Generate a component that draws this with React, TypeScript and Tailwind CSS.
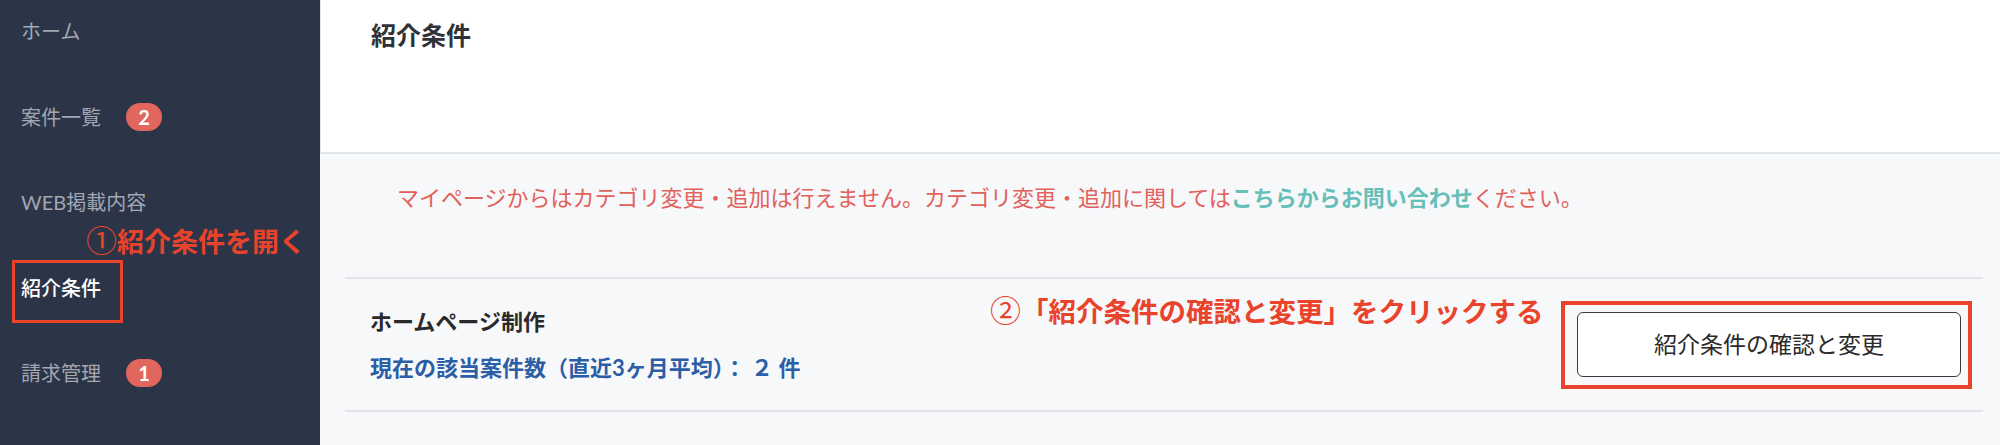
const font = "font-['Lato','Noto_Sans_CJK_JP',sans-serif]";

function NavItem({ label, badge, active }: { label: string; badge?: string; active?: boolean }) {
    return (
        <div className="flex h-6 items-center pl-[21px]">
            <span className={active ? "text-[20px] leading-6 font-medium text-white" : "text-[20px] leading-6 text-[#a2a7b1]"}>
                {label}
            </span>
            {badge && (
                <span className="ml-[25px] flex h-[28px] w-[36px] items-center justify-center rounded-full bg-[#e0665e] text-[20px] font-bold text-white">
                    {badge}
                </span>
            )}
        </div>
    );
}

function Sidebar() {
    return (
        <aside className="relative flex h-[445px] w-[320px] shrink-0 flex-col gap-[61.5px] bg-[#2c3548] pt-[19px]">
            <NavItem label="ホーム" />
            <NavItem label="案件一覧" badge="2" />
            <NavItem label="WEB掲載内容" />
            <NavItem label="紹介条件" active />
            <NavItem label="請求管理" badge="1" />

            {/* annotation overlays */}
            <div className="absolute left-[86px] top-[225px] flex items-baseline text-[27px] leading-[28px] font-bold text-[#e9432b]">
                <span className="font-['Noto_Sans_CJK_JP',sans-serif] text-[31px] font-normal">①</span>
                <span>紹介条件を開く</span>
            </div>
            <div className="absolute left-[12px] top-[260px] h-[63px] w-[111px] border-[3px] border-[#e9432b]" />
        </aside>
    );
}

export default function App() {
    return (
        <div className={`flex h-[445px] w-[2000px] overflow-hidden ${font}`}>
            <Sidebar />
            <main className="flex flex-1 flex-col">
                <header className="h-[154px] shrink-0 border-b-2 border-l border-[#e1e4e8] bg-white pl-[50px] pt-[21px]">
                    <h1 className="text-[25px] leading-[28px] font-bold text-[#2f3236]">紹介条件</h1>
                </header>
                <section className="flex-1 bg-[#f7f8fa] pl-[25px] pr-[17px]">
                    <div className="h-[123px] pl-[52px] pt-[33px] text-[22px] leading-[22px] text-[#e2615b]">
                        マイページからはカテゴリ変更・追加は行えません。カテゴリ変更・追加に関しては
                        <span className="font-bold text-[#66bfb8]">こちらからお問い合わせ</span>
                        ください。
                    </div>
                    <div className="relative flex h-[135px] items-center justify-between border-y-2 border-[#e1e3e7] pl-[25px] pr-[22px]">
                        <div className="flex flex-col gap-[24px]">
                            <div className="text-[22px] leading-[22px] font-bold text-[#2a2a2a]">ホームページ制作</div>
                            <div className="text-[22px] leading-[22px] font-bold text-[#2b5ea6]">
                                現在の該当案件数（直近3ヶ月平均）： ２ 件
                            </div>
                        </div>

                        <div className="absolute left-[645px] top-[16px] flex items-baseline text-[27.5px] leading-[28px] font-bold text-[#e9432b]">
                            <span className="font-['Noto_Sans_CJK_JP',sans-serif] text-[31px] font-normal">②</span>
                            <span>「紹介条件の確認と変更」をクリックする</span>
                        </div>

                        <div className="relative">
                            <button className="flex h-[65px] w-[384px] items-center justify-center rounded-[6px] border-[1.5px] border-[#3a3b3e] bg-white text-[23px] text-[#2a2a2a]">
                                紹介条件の確認と変更
                            </button>
                            <div className="absolute -bottom-[12px] -left-[16px] -right-[11px] -top-[11px] border-4 border-[#e9432b]" />
                        </div>
                    </div>
                </section>
            </main>
        </div>
    );
}
